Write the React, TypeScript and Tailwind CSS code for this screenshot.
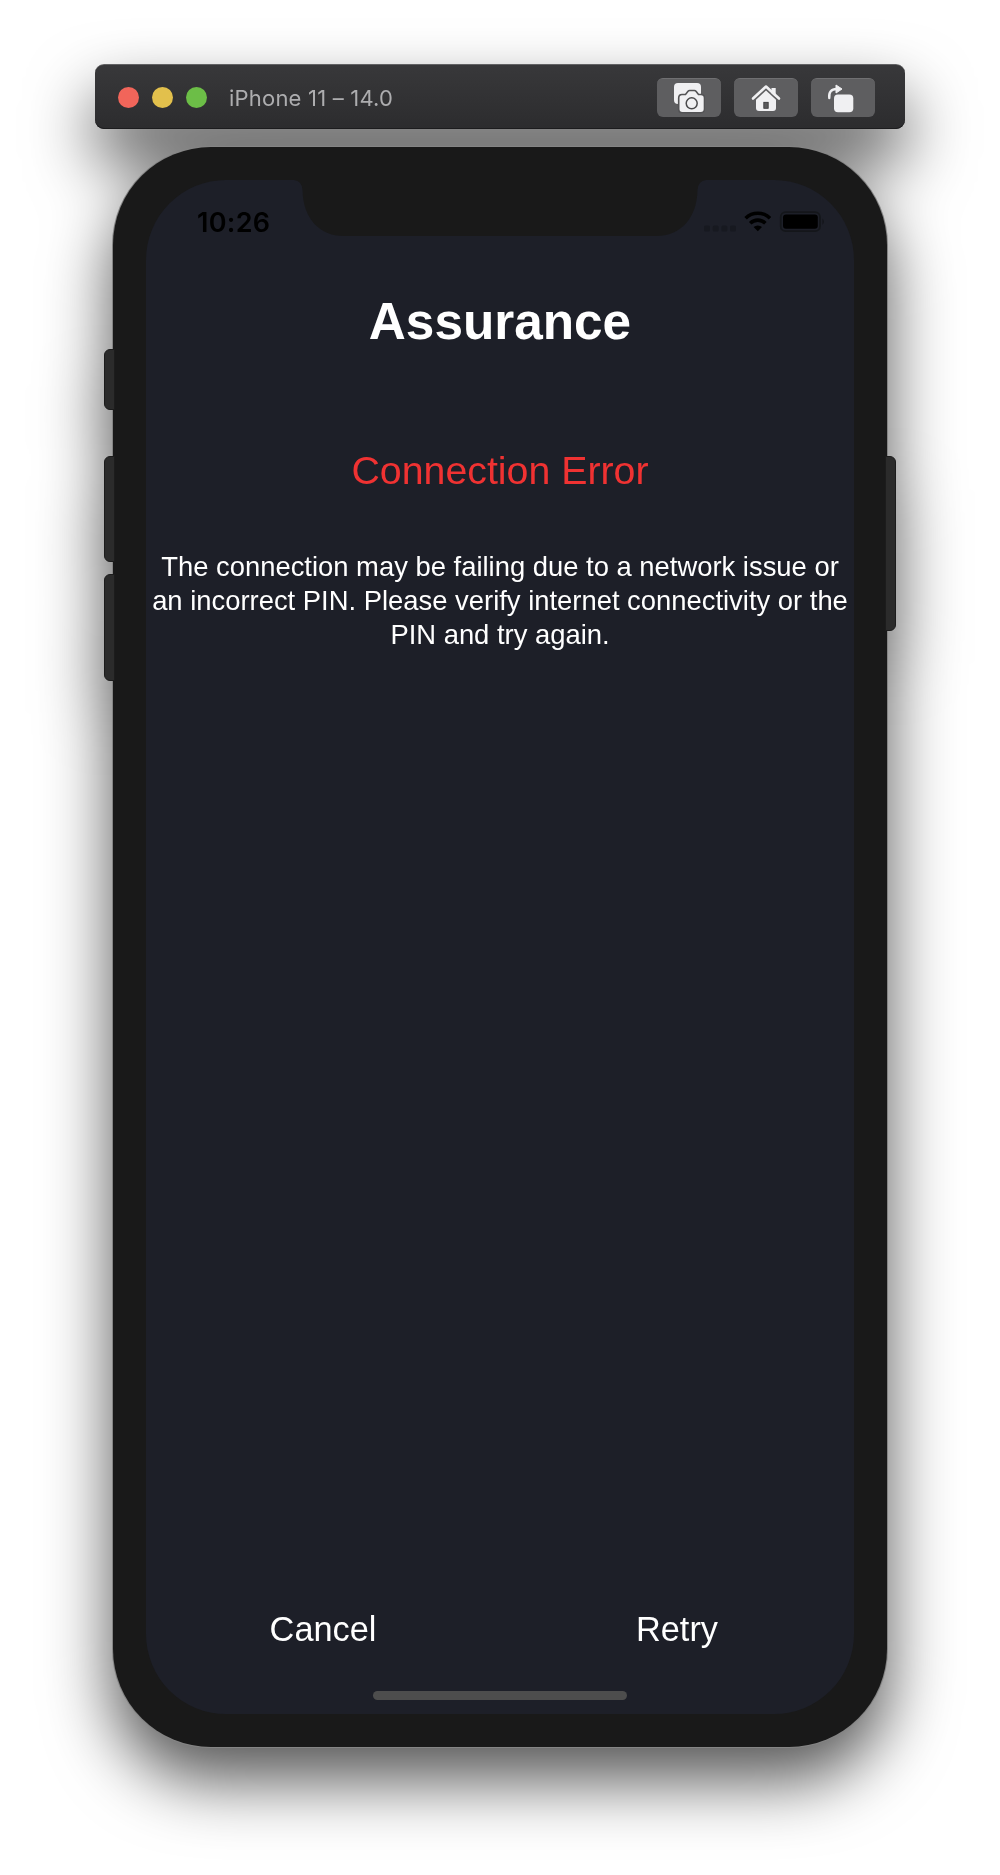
import React from "react";

const SANS = "font-['Liberation_Sans',Arial,sans-serif]";

function ToolButton({ children }: { children: React.ReactNode }) {
  return (
    <button className="flex h-[39px] w-16 items-center justify-center rounded-[6px] border-t border-[#707072] bg-[#5e5e60]">
      {children}
    </button>
  );
}

function CameraIcon() {
  return (
    <svg width="32" height="32" viewBox="0 0 32 32">
      <rect x="1" y="1" width="27" height="21" rx="4" fill="#f0f0f2" />
      <path
        d="M9 12.500h3.500l2.500-3.300q.6-.7 1.600-.7h4.800q1 0 1.600.7l2.500 3.300H28q3.500 0 3.500 3.500v11q0 3.700-3.700 3.700H9.400q-3.700 0-3.700-3.700V16q0-3.500 3.300-3.500z"
        fill="#f0f0f2"
        stroke="#535355"
        strokeWidth="1.6"
      />
      <circle cx="18.700" cy="21.300" r="5.500" fill="none" stroke="#4a4a4c" strokeWidth="1.500" />
    </svg>
  );
}

function HomeIcon() {
  return (
    <svg width="30" height="28" viewBox="0 0 30 28">
      <path d="M20.500 4h4.200v9l-4.200-3.500z" fill="#f0f0f2" />
      <path d="M2 14.500 15 2.500l13 12" fill="none" stroke="#f0f0f2" strokeWidth="2.600" strokeLinecap="round" strokeLinejoin="round" />
      <path d="M15 6.500 25 15.700v8.300q0 3-3 3H8q-3 0-3-3v-8.300z" fill="#f0f0f2" />
      <rect x="12.800" y="18.300" width="4.400" height="6" fill="#5a5a5c" stroke="#333335" strokeWidth=".8" />
    </svg>
  );
}

function RotateIcon() {
  return (
    <svg className="-ml-[5px]" width="27" height="29" viewBox="0 0 27 29">
      <path d="M2.300 14C1.500 8 4.500 5 9.500 5" fill="none" stroke="#f0f0f2" strokeWidth="2.400" strokeLinecap="round" />
      <path d="M9 1v8l6-4z" fill="#f0f0f2" stroke="#f0f0f2" strokeWidth="1" strokeLinejoin="round" />
      <rect x="7" y="10.500" width="19.300" height="17.800" rx="4" fill="#f0f0f2" />
    </svg>
  );
}

function TitleBar() {
  return (
    <header className="flex h-[65px] w-[810px] items-center rounded-[9px] border-t border-[#626264] bg-linear-to-b from-[#38383a] to-[#2c2c2e] pt-px pr-[30px] pl-[23px] shadow-[inset_0_-1px_0_#1c1c1e]">
      <div className="flex gap-[13px]">
        <span className="size-[21px] rounded-full bg-[#f1655a]" />
        <span className="size-[21px] rounded-full bg-[#e2c04c]" />
        <span className="size-[21px] rounded-full bg-[#6cbe47]" />
      </div>
      <h1 className="mt-px ml-[22px] font-[Inter,sans-serif] text-[22px] tracking-[0.2px] whitespace-nowrap text-[#adadaf]">iPhone 11 – 14.0</h1>
      <div className="ml-auto flex gap-[13px]">
        <ToolButton><CameraIcon /></ToolButton>
        <ToolButton><HomeIcon /></ToolButton>
        <ToolButton><RotateIcon /></ToolButton>
      </div>
    </header>
  );
}

function StatusIcons() {
  return (
    <svg width="122" height="24" viewBox="0 0 122 24">
      <g fill="#171920">
        <rect x="0" y="14.500" width="6" height="6" rx="1.500" />
        <rect x="8.700" y="14.500" width="6" height="6" rx="1.500" />
        <rect x="17.400" y="14.500" width="6" height="6" rx="1.500" />
        <rect x="26" y="14.500" width="6" height="6" rx="1.500" />
      </g>
      <g fill="none" stroke="#000" strokeWidth="3.600">
        <path d="M41.600 7.200a17.500 17.500 0 0 1 24.400 0" />
        <path d="M46.200 12.200a11 11 0 0 1 15.200 0" />
      </g>
      <path d="M49.600 16.100a6.300 6.300 0 0 1 8.400 0l-4.200 4.200z" fill="#000" />
      <rect x="76.700" y="1.200" width="39.300" height="19" rx="5" fill="none" stroke="#14161a" strokeWidth="1.800" />
      <rect x="79" y="3.500" width="34.800" height="14.300" rx="3" fill="#000" />
      <path d="M118.500 7.500q2.500 3.200 0 6.500z" fill="#121317" />
    </svg>
  );
}

function Notch() {
  return (
    <svg className="absolute top-0 left-1/2 -translate-x-1/2" width="412" height="57" viewBox="0 0 412 57">
      <path d="M0 0Q8 1 8.500 10C9 38 25 56 50 56H362C387 56 403 38 403.500 10Q404 1 412 0z" fill="#191919" />
    </svg>
  );
}

const sideButtons = [
  "left-[-9px] top-[202px] h-[61px] rounded-l-[6px]",
  "left-[-9px] top-[309px] h-[106px] rounded-l-[6px]",
  "left-[-9px] top-[427px] h-[107px] rounded-l-[6px]",
  "right-[-9px] top-[309px] h-[175px] rounded-r-[6px]",
];

export default function App() {
  return (
    <main className={`h-[1875px] w-[1000px] overflow-hidden bg-white pt-16 ${SANS}`}>
      <div className="flex flex-col items-center drop-shadow-[0_33px_33px_rgba(0,0,0,0.66)]">
        <TitleBar />
        <section className="relative mt-[18px] h-[1600px] w-[774px] rounded-[98px] bg-[#191919] p-[33px] shadow-[0_0_0_1px_#858585]">
          {sideButtons.map((c) => (
            <div key={c} className={`absolute w-[11px] border border-[#1c1c1c] bg-[#2b2b2b] ${c}`} />
          ))}
          <div className="relative flex h-[1534px] w-[708px] flex-col overflow-hidden rounded-[80px] bg-[#1d1f28] text-white">
            <Notch />
            <div className="flex h-[86px] items-start justify-between pt-[31px] pr-[28px] pl-[51px]">
              <time className="font-[Inter,sans-serif] text-[27px] leading-[24px] font-semibold tracking-[0.3px] text-black">10:26</time>
              <StatusIcons />
            </div>
            <h2 className="mt-[26px] text-center text-[51.300px] leading-[60px] font-bold">Assurance</h2>
            <p className="mt-[94px] text-center text-[39.300px] leading-[48px] text-[#f03232]">Connection Error</p>
            <p className="mt-[56px] text-center text-[27.400px] leading-[34.200px] whitespace-nowrap">
              The connection may be failing due to a network issue or
              <br />
              an incorrect PIN. Please verify internet connectivity or the
              <br />
              PIN and try again.
            </p>
            <div className="mt-auto grid grid-cols-2 pb-[65px] text-center text-[34.300px] leading-[40px]">
              <button>Cancel</button>
              <button>Retry</button>
            </div>
            <div className="absolute bottom-[14px] left-1/2 h-[9px] w-[254px] -translate-x-1/2 rounded-full bg-[#4d4d4d]" />
          </div>
        </section>
      </div>
    </main>
  );
}
